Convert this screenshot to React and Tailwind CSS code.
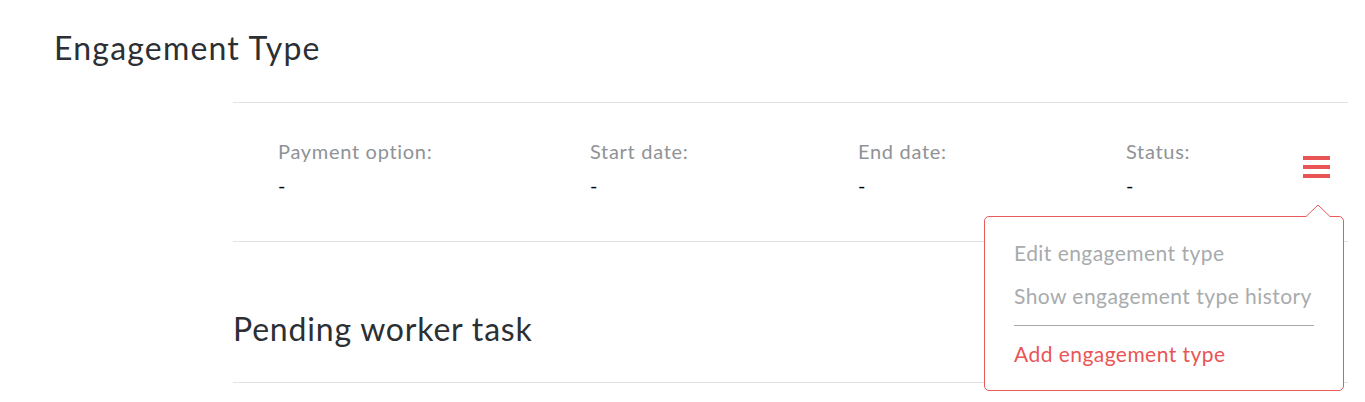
import { useState } from "react";

const fields = [
  { label: "Payment option:", value: "-", width: "w-[312px]" },
  { label: "Start date:", value: "-", width: "w-[268px]" },
  { label: "End date:", value: "-", width: "w-[268px]" },
  { label: "Status:", value: "-", width: "w-[160px]" },
];

function HamburgerMenu() {
  const [open, setOpen] = useState(true);

  return (
    <div className="relative">
      <button
        onClick={() => setOpen(!open)}
        className="flex flex-col gap-[5px] w-[27px] py-1"
      >
        <span className="block h-[4px] w-full bg-[#e95555]" />
        <span className="block h-[4px] w-full bg-[#e95555]" />
        <span className="block h-[4px] w-full bg-[#e95555]" />
      </button>

      {open && (
        <div className="absolute right-[-14px] top-[64px] z-10 w-[360px] rounded-[5px] border border-[#e95a5a] bg-white px-[29px] pt-[14px] pb-[15px]">
          {/* caret */}
          <svg
            className="absolute right-[12px] top-[-13px]"
            width="26"
            height="14"
            viewBox="0 0 26 14"
          >
            <path d="M0 13.5 L13 1 L26 13.5" fill="white" stroke="#e95a5a" strokeWidth="1" />
            <rect x="0" y="13" width="26" height="2" fill="white" />
          </svg>
          <ul className="text-[21px] leading-[43px] tracking-[0.45px]">
            <li className="text-[#a8abad]">Edit engagement type</li>
            <li className="text-[#a8abad]">Show engagement type history</li>
          </ul>
          <div className="mt-[8px] mb-[6px] h-px w-full bg-[#a9a9a9]" />
          <div className="text-[21px] leading-[43px] tracking-[0.45px] text-[#e95555]">Add engagement type</div>
        </div>
      )}
    </div>
  );
}

export default function App() {
  return (
    <div className="min-h-screen bg-white font-['Lato',sans-serif] text-[#2c2f33]">
      <h1 className="pl-[54px] pt-[28px] text-[32px] leading-[40px] tracking-[1.2px] font-normal">
        Engagement Type
      </h1>

      <div className="ml-[233px] mr-[17px] mt-[34px]">
        <div className="flex items-start border-y border-[#e1e4e6] pl-[45px] pt-[35px] pb-[41px]">
          {fields.map((f) => (
            <div key={f.label} className={f.width}>
              <div className="text-[20px] leading-[26px] tracking-[0.7px] text-[#8f9396]">{f.label}</div>
              <div className="mt-[6px] text-[20px] leading-[30px] text-black">{f.value}</div>
            </div>
          ))}
          <div className="ml-auto mr-[18px] mt-[14px]">
            <HamburgerMenu />
          </div>
        </div>

        <h2 className="pt-[67px] pb-[33px] border-b border-[#e1e4e6] text-[32px] leading-[40px] tracking-[0.8px] font-normal">
          Pending worker task
        </h2>
      </div>
    </div>
  );
}
